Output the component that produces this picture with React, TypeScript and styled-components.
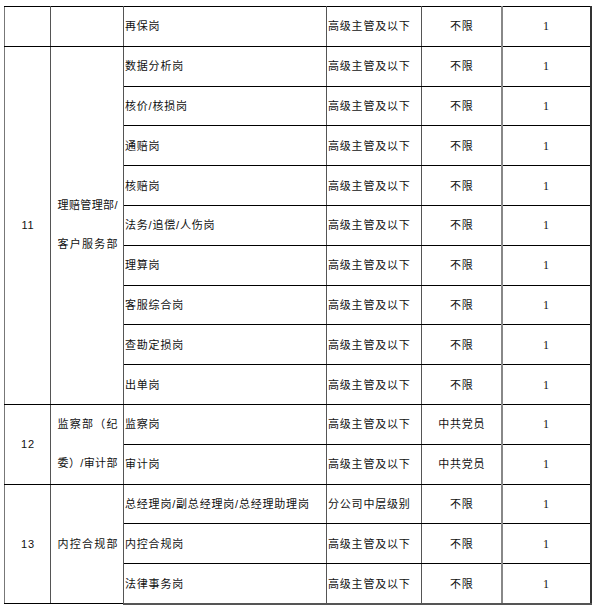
import React from "react";
import styled, { createGlobalStyle } from "styled-components";

const Global = createGlobalStyle`
  html, body { margin: 0; padding: 0; background: #fff; }
  body { font-family: "Liberation Sans", "Noto Sans CJK SC", sans-serif; color: #000; }
`;

const Page = styled.div`
  padding: 6px 0 0 4px;
`;

const Table = styled.table`
  border-collapse: collapse;
  table-layout: fixed;
  width: 586px;
  font-size: 11px;
  letter-spacing: 0.8px;
`;

const Cell = styled.td<{ $align?: "left" | "center"; $serif?: boolean; $thick?: boolean }>`
  height: 38.8px;
  padding: 0 0 0 1px;
  border-top: 1px solid #000;
  border-bottom: 1px solid #000;
  border-left: 1px solid #555;
  border-right: ${(p) => (p.$thick ? "2px solid #888" : "1px solid #555")};
  text-align: ${(p) => p.$align ?? "left"};
  vertical-align: middle;
  white-space: nowrap;
  font-family: ${(p) =>
    p.$serif
      ? `"Liberation Serif", "Times New Roman", serif`
      : `"Liberation Sans", "Noto Sans CJK SC", sans-serif`};
  font-size: ${(p) => (p.$serif ? "12px" : "11px")};
  color: #111;
  line-height: 14px;
  &:first-child { border-left: 1px solid #777; }
  &:last-child { border-right: 2px solid #333; }
`;

const DeptBlock = styled.div`
  display: inline-block;
  width: 60px;
  line-height: 39px;
  vertical-align: middle;
`;

const DeptLine = styled.div`
  text-align: justify;
  text-align-last: justify;
  letter-spacing: 0;
`;

const LastRow = styled.tr`
  & > td { border-bottom: 2px solid #555; }
`;

type Job = { name: string; level: string; req: string };

type Group = { no: string; dept: string[]; jobs: Job[] };

const std = (name: string, req = "不限"): Job => ({ name, level: "高级主管及以下", req });

const groups: Group[] = [
  {
    no: "11",
    dept: ["理赔管理部/", "客户服务部"],
    jobs: [
      std("数据分析岗"),
      std("核价/核损岗"),
      std("通赔岗"),
      std("核赔岗"),
      std("法务/追偿/人伤岗"),
      std("理算岗"),
      std("客服综合岗"),
      std("查勘定损岗"),
      std("出单岗"),
    ],
  },
  {
    no: "12",
    dept: ["监察部（纪", "委）/审计部"],
    jobs: [std("监察岗", "中共党员"), std("审计岗", "中共党员")],
  },
  {
    no: "13",
    dept: ["内控合规部"],
    jobs: [
      { name: "总经理岗/副总经理岗/总经理助理岗", level: "分公司中层级别", req: "不限" },
      std("内控合规岗"),
      std("法律事务岗"),
    ],
  },
];

const JobCells = ({ job }: { job: Job }) => (
  <>
    <Cell>{job.name}</Cell>
    <Cell>{job.level}</Cell>
    <Cell $align="center" $thick>
      {job.req}
    </Cell>
    <Cell $align="center" $serif>
      1
    </Cell>
  </>
);

export default function App() {
  const rows: React.ReactNode[] = [];
  rows.push(
    <tr key="first">
      <Cell />
      <Cell />
      <JobCells job={std("再保岗")} />
    </tr>
  );
  groups.forEach((g, gi) => {
    g.jobs.forEach((job, ji) => {
      const isLast = gi === groups.length - 1 && ji === g.jobs.length - 1;
      const Row = isLast ? LastRow : "tr";
      rows.push(
        <Row key={`${g.no}-${ji}`}>
          {ji === 0 && (
            <>
              <Cell rowSpan={g.jobs.length} $align="center">
                {g.no}
              </Cell>
              <Cell rowSpan={g.jobs.length} $align="center">
                <DeptBlock>
                  {g.dept.map((l) => (
                    <DeptLine key={l}>{l}</DeptLine>
                  ))}
                </DeptBlock>
              </Cell>
            </>
          )}
          <JobCells job={job} />
        </Row>
      );
    });
  });

  return (
    <>
      <Global />
      <Page>
        <Table>
          <colgroup>
            <col style={{ width: 46 }} />
            <col style={{ width: 73 }} />
            <col style={{ width: 203 }} />
            <col style={{ width: 95 }} />
            <col style={{ width: 80 }} />
            <col style={{ width: 89 }} />
          </colgroup>
          <tbody>{rows}</tbody>
        </Table>
      </Page>
    </>
  );
}
